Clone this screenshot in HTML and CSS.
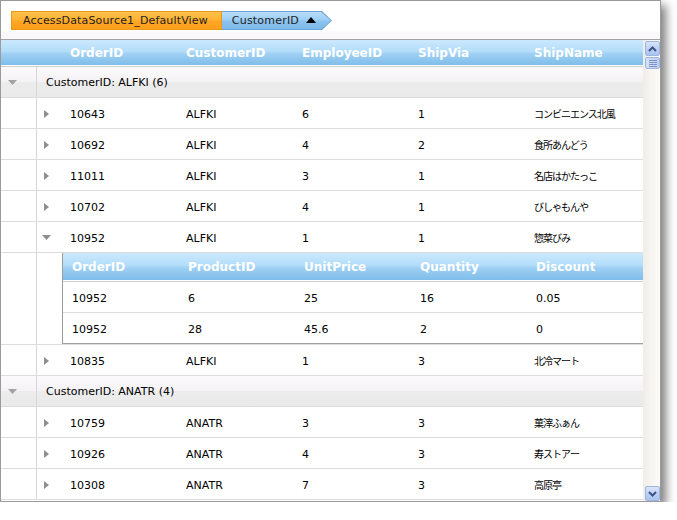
FILE: index.html
```html
<!DOCTYPE html>
<html>
<head>
<meta charset="utf-8">
<link rel="stylesheet" href="styles.css">
</head>
<body>
<div class="window">
  <div class="crumbs">
    <span class="crumb-main">AccessDataSource1_DefaultView</span>
    <span class="crumb-sort"><span class="crumb-sort-inner">CustomerID <svg class="sort-ico" width="10" height="6" viewBox="0 0 10 6"><polygon points="0,6 10,6 5,0" fill="#000"/></svg></span></span>
  </div>
  <div class="body">
    <div class="grid">
      <div class="thead">
        <div class="row head">
          <div class="cell-indent"></div><div></div>
          <div class="hcell">OrderID</div><div class="hcell">CustomerID</div><div class="hcell">EmployeeID</div><div class="hcell">ShipVia</div><div class="hcell">ShipName</div>
        </div>
      </div>

      <div class="row group">
        <div class="cell-indent"><svg class="ico-group" width="9" height="5" viewBox="0 0 9 5"><polygon points="0,0 9,0 4.5,5" fill="#a3a3a3"/></svg></div>
        <div class="group-label">CustomerID: ALFKI (6)</div>
      </div>

      <div class="row data">
        <div class="cell-indent"></div>
        <div class="cell-exp"><svg width="5" height="8" viewBox="0 0 5 8"><polygon points="0,0 5,4 0,8" fill="#8e8e8e"/></svg></div>
        <div class="cell">10643</div><div class="cell">ALFKI</div><div class="cell">6</div><div class="cell">1</div><div class="cell jp">コンビニエンス北風</div>
      </div>
      <div class="row data">
        <div class="cell-indent"></div>
        <div class="cell-exp"><svg width="5" height="8" viewBox="0 0 5 8"><polygon points="0,0 5,4 0,8" fill="#8e8e8e"/></svg></div>
        <div class="cell">10692</div><div class="cell">ALFKI</div><div class="cell">4</div><div class="cell">2</div><div class="cell jp">食所あんどう</div>
      </div>
      <div class="row data">
        <div class="cell-indent"></div>
        <div class="cell-exp"><svg width="5" height="8" viewBox="0 0 5 8"><polygon points="0,0 5,4 0,8" fill="#8e8e8e"/></svg></div>
        <div class="cell">11011</div><div class="cell">ALFKI</div><div class="cell">3</div><div class="cell">1</div><div class="cell jp">名店はかたっこ</div>
      </div>
      <div class="row data">
        <div class="cell-indent"></div>
        <div class="cell-exp"><svg width="5" height="8" viewBox="0 0 5 8"><polygon points="0,0 5,4 0,8" fill="#8e8e8e"/></svg></div>
        <div class="cell">10702</div><div class="cell">ALFKI</div><div class="cell">4</div><div class="cell">1</div><div class="cell jp">びしゃもんや</div>
      </div>
      <div class="row data">
        <div class="cell-indent"></div>
        <div class="cell-exp open"><svg width="9" height="5" viewBox="0 0 9 5"><polygon points="0,0 9,0 4.5,5" fill="#8e8e8e"/></svg></div>
        <div class="cell">10952</div><div class="cell">ALFKI</div><div class="cell">1</div><div class="cell">1</div><div class="cell jp">惣菜びみ</div>
      </div>

      <div class="row detail-row">
        <div class="cell-indent"></div><div></div>
        <div class="detail">
          <div class="dthead">
            <div class="drow dhead">
              <div class="dhcell">OrderID</div><div class="dhcell">ProductID</div><div class="dhcell">UnitPrice</div><div class="dhcell">Quantity</div><div class="dhcell">Discount</div>
            </div>
          </div>
          <div class="drow ddata">
            <div class="dcell">10952</div><div class="dcell">6</div><div class="dcell">25</div><div class="dcell">16</div><div class="dcell">0.05</div>
          </div>
          <div class="drow ddata last">
            <div class="dcell">10952</div><div class="dcell">28</div><div class="dcell">45.6</div><div class="dcell">2</div><div class="dcell">0</div>
          </div>
        </div>
      </div>

      <div class="row data">
        <div class="cell-indent"></div>
        <div class="cell-exp"><svg width="5" height="8" viewBox="0 0 5 8"><polygon points="0,0 5,4 0,8" fill="#8e8e8e"/></svg></div>
        <div class="cell">10835</div><div class="cell">ALFKI</div><div class="cell">1</div><div class="cell">3</div><div class="cell jp">北冷マート</div>
      </div>

      <div class="row group">
        <div class="cell-indent"><svg class="ico-group" width="9" height="5" viewBox="0 0 9 5"><polygon points="0,0 9,0 4.5,5" fill="#a3a3a3"/></svg></div>
        <div class="group-label">CustomerID: ANATR (4)</div>
      </div>

      <div class="row data">
        <div class="cell-indent"></div>
        <div class="cell-exp"><svg width="5" height="8" viewBox="0 0 5 8"><polygon points="0,0 5,4 0,8" fill="#8e8e8e"/></svg></div>
        <div class="cell">10759</div><div class="cell">ANATR</div><div class="cell">3</div><div class="cell">3</div><div class="cell jp">菓滓ふぁん</div>
      </div>
      <div class="row data">
        <div class="cell-indent"></div>
        <div class="cell-exp"><svg width="5" height="8" viewBox="0 0 5 8"><polygon points="0,0 5,4 0,8" fill="#8e8e8e"/></svg></div>
        <div class="cell">10926</div><div class="cell">ANATR</div><div class="cell">4</div><div class="cell">3</div><div class="cell jp">寿ストアー</div>
      </div>
      <div class="row data">
        <div class="cell-indent"></div>
        <div class="cell-exp"><svg width="5" height="8" viewBox="0 0 5 8"><polygon points="0,0 5,4 0,8" fill="#8e8e8e"/></svg></div>
        <div class="cell">10308</div><div class="cell">ANATR</div><div class="cell">7</div><div class="cell">3</div><div class="cell jp">高原亭</div>
      </div>
    </div>

    <div class="scroll">
      <div class="sb-btn"><svg width="9" height="6" viewBox="0 0 9 6"><polyline points="1,5 4.5,1.5 8,5" stroke="#3d5283" stroke-width="2" fill="none"/></svg></div>
      <div class="sb-thumb"><span></span><span></span><span></span><span></span></div>
      <div class="sb-track"></div>
      <div class="sb-btn"><svg width="9" height="6" viewBox="0 0 9 6"><polyline points="1,1 4.5,4.5 8,1" stroke="#3d5283" stroke-width="2" fill="none"/></svg></div>
    </div>
  </div>
</div>
</body>
</html>
```

FILE: styles.css
```css
html, body {
  margin: 0;
  padding: 0;
  background: #fff;
}

body {
  font-family: "DejaVu Sans", "Noto Sans CJK JP", sans-serif;
  font-size: 11px;
  color: #000;
}

.window {
  width: 659px;
  border: 1px solid #9a9a9a;
  background: #fff;
  box-shadow: 5px 5px 9px rgba(0, 0, 0, 0.5);
}

/* breadcrumbs */
.crumbs {
  height: 39px;
  box-sizing: border-box;
  padding: 10px 0 0 10px;
  display: flex;
  align-items: flex-start;
  background: linear-gradient(#ffffff 0%, #ffffff 78%, #fbf8fb 82%, #fbf8fb 100%);
  border-bottom: 1px solid #a2a2a2;
}

.crumb-main {
  height: 17px;
  line-height: 17px;
  padding: 0 13px 0 11px;
  border: 1px solid #e79a1a;
  background: linear-gradient(#ffc24c 0%, #ffb233 45%, #ffa625 55%, #ff9f1b 100%);
  color: #1e1e1e;
  letter-spacing: 0.15px;
}

.crumb-sort {
  display: flex;
  padding: 1px 1px 1px 0;
  background: #6ea4d4;
  clip-path: polygon(0 0, calc(100% - 10px) 0, 100% 50%, calc(100% - 10px) 100%, 0 100%);
}

.crumb-sort-inner {
  display: flex;
  align-items: center;
  gap: 7px;
  height: 17px;
  padding: 0 15px 0 10px;
  background: linear-gradient(#b9def9 0%, #9ccff4 45%, #8bc3ee 55%, #7db9e8 100%);
  clip-path: polygon(0 0, calc(100% - 10px) 0, 100% 50%, calc(100% - 10px) 100%, 0 100%);
  color: #1e1e1e;
  letter-spacing: 0.2px;
}

.sort-ico {
  display: block;
  margin-top: -1px;
}

/* body */
.body {
  display: flex;
  height: 461px;
  overflow: hidden;
}

.grid {
  width: 642px;
  flex: none;
}

.row {
  display: grid;
  grid-template-columns: 36px 25px 116px 116px 116px 116px 117px;
  height: 30px;
  border-bottom: 1px solid #dcdcdc;
}

.cell-indent {
  border-right: 1px solid #d6d6d6;
  display: flex;
  align-items: center;
}

.thead {
  border-bottom: 1px solid #cfcfcf;
}

.row.head {
  height: 25px;
  border-bottom: 1px solid #fff;
  background: linear-gradient(#cbe9fe 0%, #b3ddfa 45%, #9fd0f4 55%, #7fbde9 100%);
}

.row.head .cell-indent {
  border-right: none;
}

.hcell {
  display: flex;
  align-items: center;
  padding: 1px 0 0 8px;
  color: #fff;
  font-weight: bold;
  font-size: 12px;
}

.row.group {
  background: linear-gradient(#fcfafc 0%, #f5f2f5 50%, #ececec 52%, #eaeaea 100%);
}

.ico-group {
  margin-left: 7px;
}

.group-label {
  grid-column: 2 / -1;
  display: flex;
  align-items: center;
  padding: 1px 0 0 9px;
}

.cell-exp {
  display: flex;
  align-items: center;
  padding: 1px 0 0 7px;
}

.cell-exp.open {
  padding-left: 5px;
}

.cell {
  display: flex;
  align-items: center;
  padding: 2px 0 0 8px;
  white-space: nowrap;
}

.cell.jp {
  font-family: "Noto Sans CJK JP", sans-serif;
  font-size: 10px;
  letter-spacing: -1px;
  padding-top: 1px;
}

/* detail table */
.row.detail-row {
  height: 91px;
}

.detail {
  grid-column: 3 / -1;
  border-left: 1px solid #9c9c9c;
  border-bottom: 1px solid #a0a0a0;
}

.drow {
  display: grid;
  grid-template-columns: 116px 116px 116px 116px 116px;
}

.dthead {
  border-bottom: 1px solid #cfcfcf;
}

.drow.dhead {
  height: 27px;
  border-bottom: 1px solid #fff;
  background: linear-gradient(#cbe9fe 0%, #b3ddfa 45%, #9fd0f4 55%, #7fbde9 100%);
}

.dhcell {
  display: flex;
  align-items: center;
  padding: 1px 0 0 9px;
  color: #fff;
  font-weight: bold;
  font-size: 12px;
}

.drow.ddata {
  height: 30px;
  border-bottom: 1px solid #dcdcdc;
}

.drow.ddata.last {
  border-bottom: none;
}

.dcell {
  display: flex;
  align-items: center;
  padding: 2px 0 0 9px;
}

/* scrollbar */
.scroll {
  width: 17px;
  flex: none;
  display: flex;
  flex-direction: column;
  padding: 1px 0 0 2px;
  box-sizing: border-box;
  background: linear-gradient(to right, #f0ede7 0%, #f6f4f0 40%, #fcfbf9 100%);
}

.sb-btn {
  width: 15px;
  height: 15px;
  box-sizing: border-box;
  border: 1px solid #9fb5e0;
  border-radius: 2px;
  background: linear-gradient(#d9e6fb 0%, #bcd1f5 50%, #a9c3f0 100%);
  display: flex;
  align-items: center;
  justify-content: center;
}

.sb-thumb {
  width: 15px;
  height: 12px;
  margin-top: 1px;
  box-sizing: border-box;
  border: 1px solid #9fb5e0;
  border-radius: 2px;
  background: linear-gradient(to right, #d3e2fb, #bcd1f5);
  display: flex;
  flex-direction: column;
  align-items: center;
  justify-content: center;
  gap: 1px;
}

.sb-thumb span {
  display: block;
  width: 8px;
  height: 1px;
  background: #7d94c4;
}

.sb-track {
  flex: 1;
}
```
